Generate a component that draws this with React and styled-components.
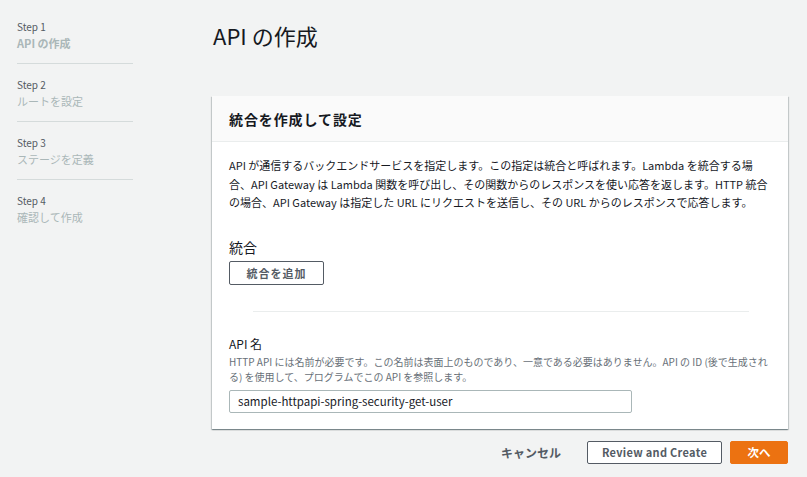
import React from "react";
import styled, { createGlobalStyle } from "styled-components";

const Global = createGlobalStyle`
  html, body { margin: 0; padding: 0; background: #f2f3f3; }
  body {
    font-family: "Noto Sans CJK JP", "Noto Sans", sans-serif;
    color: #16191f;
    width: 807px;
    height: 477px;
    overflow: hidden;
  }
  * { box-sizing: border-box; }
`;

const Page = styled.div`
  display: flex;
  width: 807px;
  height: 477px;
`;

const Nav = styled.nav`
  width: 212px;
  padding: 18px 0 0 17px;
  flex-shrink: 0;
`;

const StepItem = styled.div`
  width: 116px;
  padding: ${(p) => (p.$first ? "0" : "12px")} 0 11px;
  border-bottom: ${(p) => (p.$last ? "none" : "1px solid #d5dbdb")};
`;

const StepNum = styled.div`
  font-size: 10px;
  line-height: 17px;
  color: #545b64;
`;

const StepLabel = styled.div`
  font-size: 11px;
  line-height: 17px;
  color: #aab7b8;
  font-weight: ${(p) => (p.$active ? 700 : 400)};
`;

const Main = styled.main`
  width: 576px;
  display: flex;
  flex-direction: column;
`;

const Title = styled.h1`
  margin: 20px 0 0 1px;
  font-size: 22px;
  font-weight: 400;
  line-height: 30px;
  height: 76px;
`;

const Card = styled.section`
  background: #fff;
  box-shadow: 0 1px 1px 0 rgba(0, 28, 36, 0.3), 1px 1px 1px 0 rgba(0, 28, 36, 0.15),
    -1px 1px 1px 0 rgba(0, 28, 36, 0.15);
`;

const CardHeader = styled.header`
  background: #fafafa;
  border-bottom: 1px solid #eaeded;
  height: 46px;
  padding: 0 17px;
  display: flex;
  align-items: center;
`;

const CardTitle = styled.h2`
  margin: 0;
  font-size: 14px;
  font-weight: 700;
  letter-spacing: 0.9px;
`;

const CardBody = styled.div`
  padding: 14px 16px 16px 17px;
`;

const Para = styled.p`
  margin: 0;
  font-size: 11px;
  line-height: 18.5px;
  color: #16191f;
`;

const SectionTitle = styled.h3`
  margin: 25px 0 0;
  font-size: 14px;
  font-weight: 400;
  line-height: 20px;
`;

const OutlineButton = styled.button`
  font-family: inherit;
  font-size: ${(p) => p.$size || "11px"};
  font-weight: 700;
  color: #545b64;
  background: #fff;
  border: 1px solid #545b64;
  border-radius: 2px;
  height: ${(p) => p.$height || "24px"};
  width: ${(p) => p.$width || "auto"};
  padding: 0;
  letter-spacing: ${(p) => p.$ls || "0"};
  white-space: nowrap;
  cursor: pointer;
`;

const AddButton = styled(OutlineButton)`
  margin-top: 4px;
`;

const Divider = styled.hr`
  border: 0;
  border-top: 1px solid #eaeded;
  margin: 26px 23px 0 24px;
`;

const FieldLabel = styled.label`
  display: block;
  margin-top: 23px;
  font-size: 12px;
  line-height: 18px;
`;

const FieldDesc = styled.div`
  margin-top: 1px;
  font-size: 10px;
  line-height: 15px;
  color: #687078;
`;

const Input = styled.input`
  margin-top: 6px;
  display: block;
  width: 403px;
  height: 23px;
  border: 1px solid #aab7b8;
  border-radius: 2px;
  padding: 0 8px;
  font-family: inherit;
  font-size: 11.5px;
  color: #16191f;
  outline: none;
`;

const Footer = styled.div`
  display: flex;
  justify-content: flex-end;
  align-items: center;
  margin-top: 12px;
  gap: 8px;
`;

const TextButton = styled.button`
  font-family: inherit;
  font-size: 12px;
  font-weight: 700;
  color: #545b64;
  background: none;
  border: 0;
  padding: 0;
  margin-right: 18px;
  cursor: pointer;
`;

const PrimaryButton = styled.button`
  font-family: inherit;
  font-size: 11.5px;
  font-weight: 700;
  color: #fff;
  background: #ec7211;
  border: 1px solid #ec7211;
  border-radius: 2px;
  height: 23px;
  width: 58px;
  cursor: pointer;
`;

const steps = [
  { num: "Step 1", label: "API の作成", active: true },
  { num: "Step 2", label: "ルートを設定" },
  { num: "Step 3", label: "ステージを定義" },
  { num: "Step 4", label: "確認して作成" },
];

export default function App() {
  return (
    <>
      <Global />
      <Page>
        <Nav>
          {steps.map((s, i) => (
            <StepItem key={s.num} $first={i === 0} $last={i === steps.length - 1}>
              <StepNum>{s.num}</StepNum>
              <StepLabel $active={s.active}>{s.label}</StepLabel>
            </StepItem>
          ))}
        </Nav>
        <Main>
          <Title>API の作成</Title>
          <Card>
            <CardHeader>
              <CardTitle>統合を作成して設定</CardTitle>
            </CardHeader>
            <CardBody>
              <Para>
                API が通信するバックエンドサービスを指定します。この指定は統合と呼ばれます。Lambda を統合する場合、API Gateway は Lambda 関数を呼び出し、その関数からのレスポンスを使い応答を返します。HTTP 統合の場合、API Gateway は指定した URL にリクエストを送信し、その URL からのレスポンスで応答します。
              </Para>
              <SectionTitle>統合</SectionTitle>
              <AddButton $ls="1px" $width="95px">統合を追加</AddButton>
              <Divider />
              <FieldLabel htmlFor="apiname">API 名</FieldLabel>
              <FieldDesc>
                HTTP API には名前が必要です。この名前は表面上のものであり、一意である必要はありません。API の ID (後で生成される) を使用して、プログラムでこの API を参照します。
              </FieldDesc>
              <Input id="apiname" defaultValue="sample-httpapi-spring-security-get-user" />
            </CardBody>
          </Card>
          <Footer>
            <TextButton>キャンセル</TextButton>
            <OutlineButton $size="11px" $ls="0.3px" $width="135px" $height="23px">
              Review and Create
            </OutlineButton>
            <PrimaryButton>次へ</PrimaryButton>
          </Footer>
        </Main>
      </Page>
    </>
  );
}
